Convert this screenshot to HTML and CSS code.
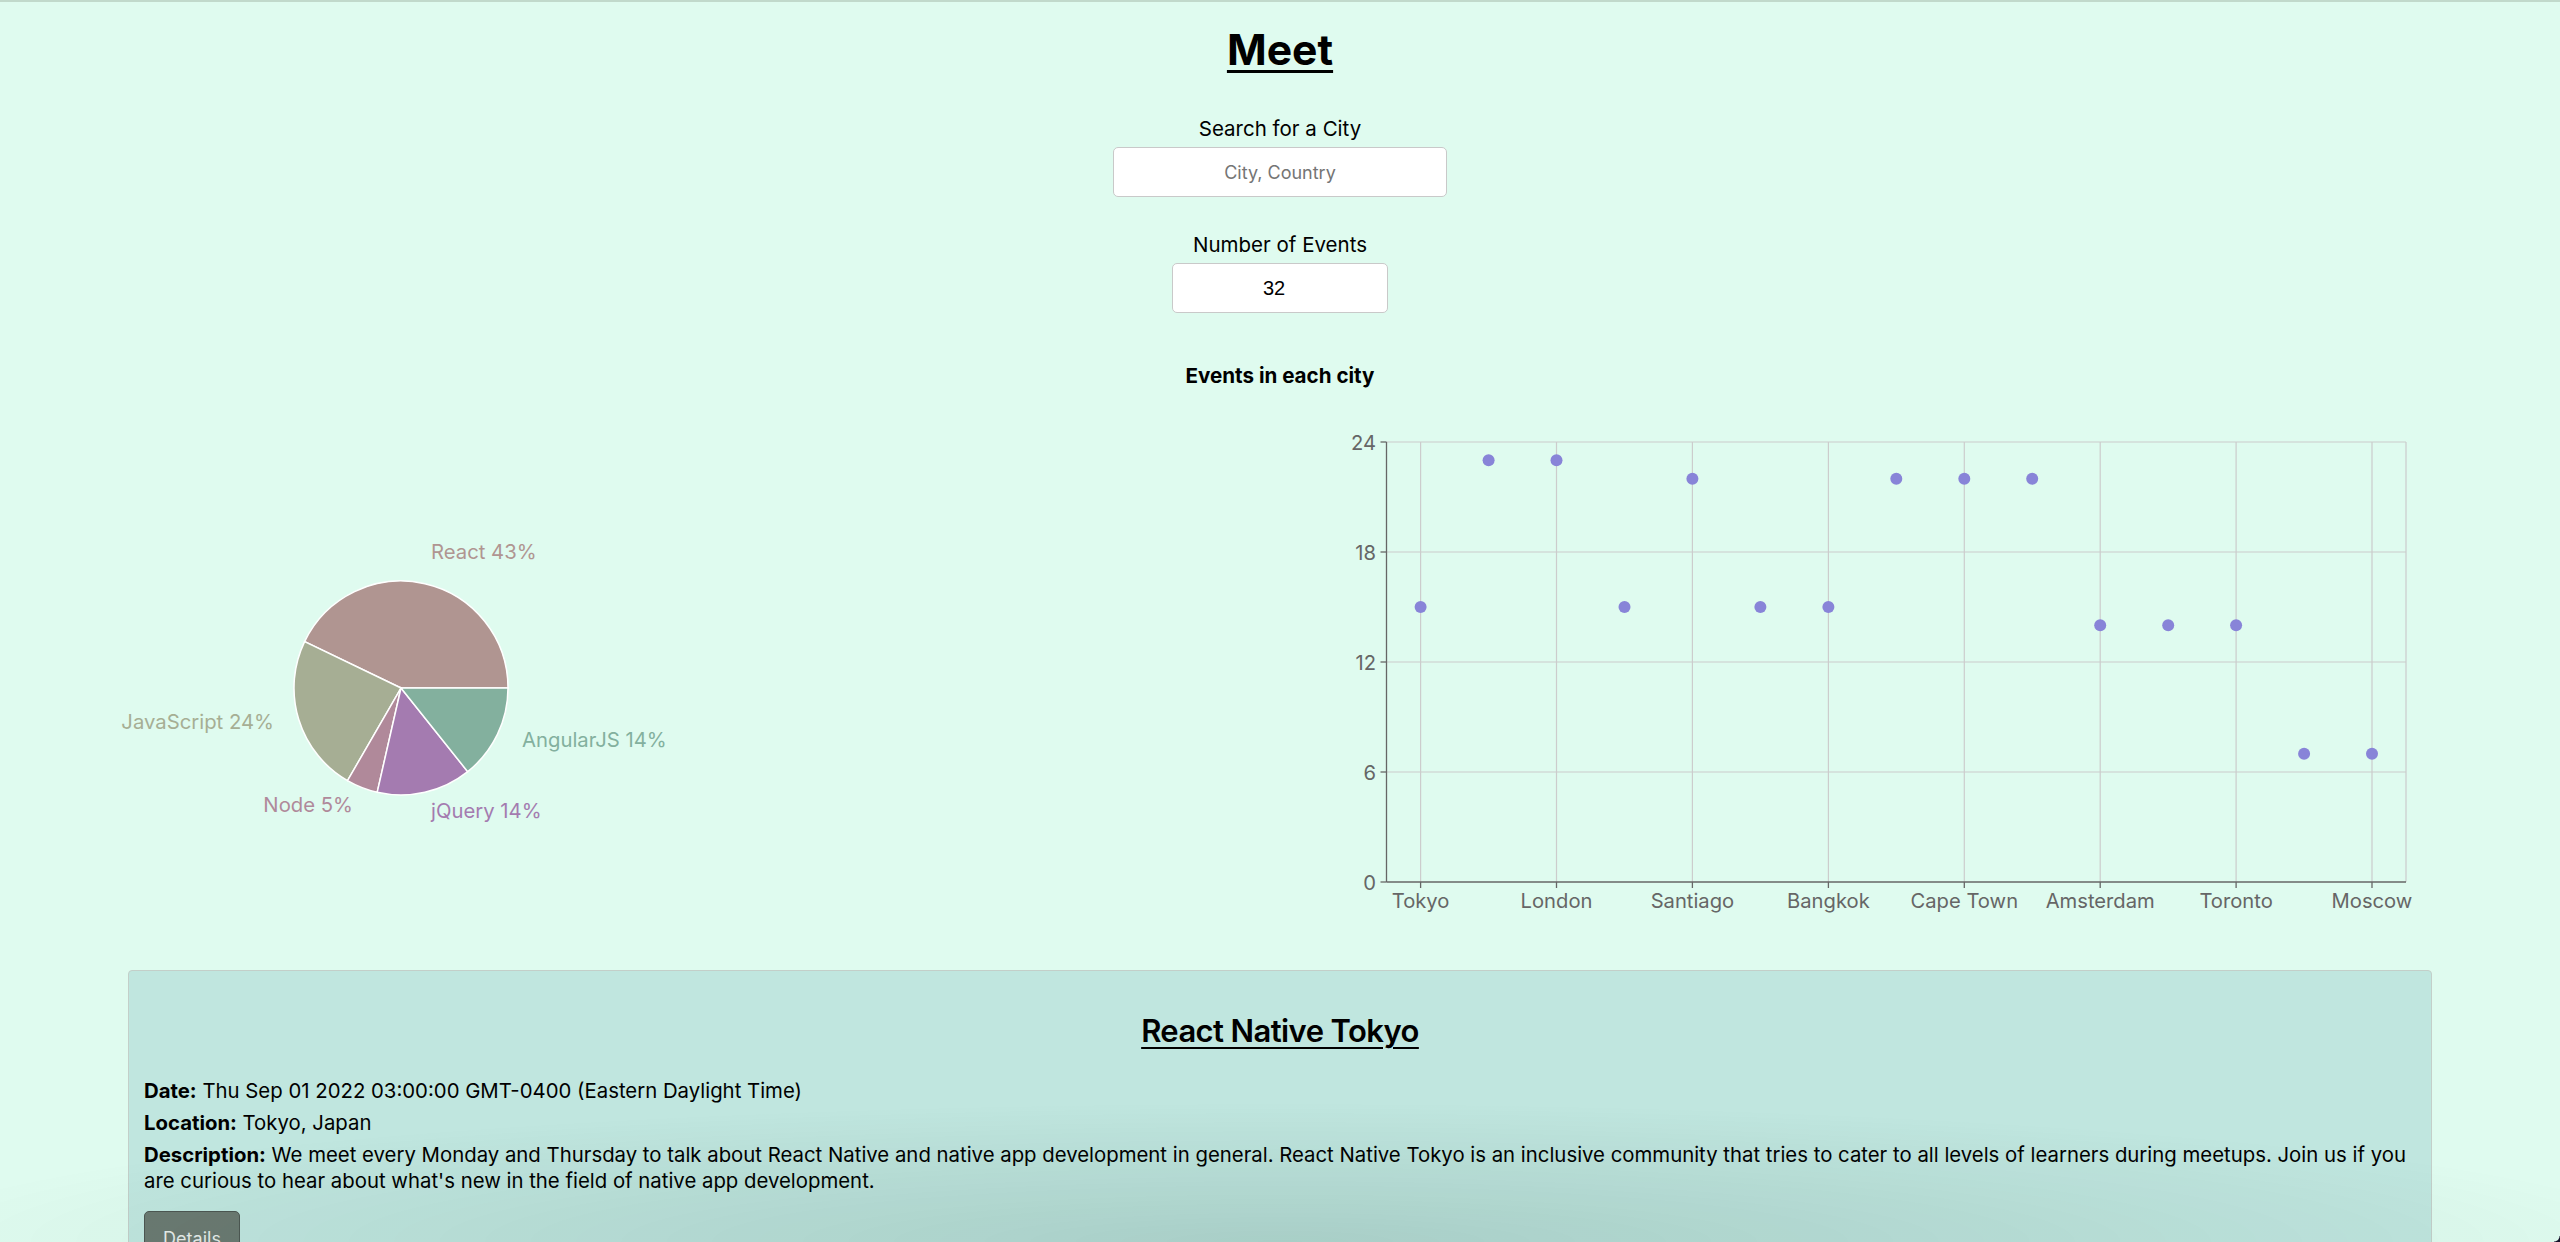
FILE: index.html
```html
<!DOCTYPE html>
<html lang="en">
<head>
<meta charset="utf-8">
<title>Meet</title>
<link rel="stylesheet" href="styles.css">
</head>
<body>
<div class="app">
  <h1 class="title">Meet</h1>

  <div class="field">
    <label class="field-label" for="city">Search for a City</label>
    <input id="city" class="city-input" type="text" placeholder="City, Country">
  </div>

  <div class="field field-number">
    <label class="field-label" for="num">Number of Events</label>
    <input id="num" class="number-input" type="number" value="32">
  </div>

  <h4 class="chart-heading">Events in each city</h4>

  <div class="charts">
    <svg class="chart pie-chart" width="1280" height="530" viewBox="0 0 1280 530">
      <g stroke="#fff" stroke-width="1.5">
        <path fill="#b09591" d="M401,288 L508,288 A107,107 0 0 0 304.60,241.57 Z"/>
        <path fill="#a6ae94" d="M401,288 L304.60,241.57 A107,107 0 0 0 347.5,380.66 Z"/>
        <path fill="#b0899a" d="M401,288 L347.5,380.66 A107,107 0 0 0 377.19,392.32 Z"/>
        <path fill="#a47bb0" d="M401,288 L377.19,392.32 A107,107 0 0 0 467.71,371.66 Z"/>
        <path fill="#83b09e" d="M401,288 L467.71,371.66 A107,107 0 0 0 508,288 Z"/>
      </g>
      <g class="pie-labels">
        <text x="431" y="159" fill="#b09591" text-anchor="start">React 43%</text>
        <text x="274" y="329" fill="#a6ae94" text-anchor="end">JavaScript 24%</text>
        <text x="522" y="347" fill="#83b09e" text-anchor="start">AngularJS 14%</text>
        <text x="353" y="412" fill="#b0899a" text-anchor="end">Node 5%</text>
        <text x="431" y="418" fill="#a47bb0" text-anchor="start">jQuery 14%</text>
      </g>
    </svg>

    <svg class="chart scatter-chart" width="1280" height="530" viewBox="0 0 1280 530">
      <g class="grid" stroke="#ccc" stroke-width="1.2" fill="none">
        <line x1="106.5" y1="42" x2="1126" y2="42"/>
        <line x1="106.5" y1="152" x2="1126" y2="152"/>
        <line x1="106.5" y1="262" x2="1126" y2="262"/>
        <line x1="106.5" y1="372" x2="1126" y2="372"/>
        <line x1="140.6" y1="42" x2="140.6" y2="482"/>
        <line x1="276.5" y1="42" x2="276.5" y2="482"/>
        <line x1="412.4" y1="42" x2="412.4" y2="482"/>
        <line x1="548.4" y1="42" x2="548.4" y2="482"/>
        <line x1="684.3" y1="42" x2="684.3" y2="482"/>
        <line x1="820.2" y1="42" x2="820.2" y2="482"/>
        <line x1="956.1" y1="42" x2="956.1" y2="482"/>
        <line x1="1092" y1="42" x2="1092" y2="482"/>
        <line x1="1126" y1="42" x2="1126" y2="482"/>
      </g>
      <g class="axis" stroke="#666" stroke-width="1.3" fill="none">
        <line x1="106.5" y1="42" x2="106.5" y2="482"/>
        <line x1="106.5" y1="482" x2="1126" y2="482"/>
        <line x1="100.5" y1="42" x2="106.5" y2="42"/>
        <line x1="100.5" y1="152" x2="106.5" y2="152"/>
        <line x1="100.5" y1="262" x2="106.5" y2="262"/>
        <line x1="100.5" y1="372" x2="106.5" y2="372"/>
        <line x1="100.5" y1="482" x2="106.5" y2="482"/>
        <line x1="140.6" y1="482" x2="140.6" y2="488"/>
        <line x1="276.5" y1="482" x2="276.5" y2="488"/>
        <line x1="412.4" y1="482" x2="412.4" y2="488"/>
        <line x1="548.4" y1="482" x2="548.4" y2="488"/>
        <line x1="684.3" y1="482" x2="684.3" y2="488"/>
        <line x1="820.2" y1="482" x2="820.2" y2="488"/>
        <line x1="956.1" y1="482" x2="956.1" y2="488"/>
        <line x1="1092" y1="482" x2="1092" y2="488"/>
      </g>
      <g class="tick-labels y-labels" text-anchor="end">
        <text x="96" y="50">24</text>
        <text x="96" y="160">18</text>
        <text x="96" y="270">12</text>
        <text x="96" y="380">6</text>
        <text x="96" y="490">0</text>
      </g>
      <g class="tick-labels x-labels" text-anchor="middle">
        <text x="140.6" y="508">Tokyo</text>
        <text x="276.5" y="508">London</text>
        <text x="412.4" y="508">Santiago</text>
        <text x="548.4" y="508">Bangkok</text>
        <text x="684.3" y="508">Cape Town</text>
        <text x="820.2" y="508">Amsterdam</text>
        <text x="956.1" y="508">Toronto</text>
        <text x="1092" y="508">Moscow</text>
      </g>
      <g class="dots" fill="#8884d8">
        <circle cx="140.6" cy="207" r="6"/>
        <circle cx="208.6" cy="60.3" r="6"/>
        <circle cx="276.5" cy="60.3" r="6"/>
        <circle cx="344.5" cy="207" r="6"/>
        <circle cx="412.4" cy="78.7" r="6"/>
        <circle cx="480.4" cy="207" r="6"/>
        <circle cx="548.4" cy="207" r="6"/>
        <circle cx="616.3" cy="78.7" r="6"/>
        <circle cx="684.3" cy="78.7" r="6"/>
        <circle cx="752.2" cy="78.7" r="6"/>
        <circle cx="820.2" cy="225.3" r="6"/>
        <circle cx="888.2" cy="225.3" r="6"/>
        <circle cx="956.1" cy="225.3" r="6"/>
        <circle cx="1024.1" cy="353.7" r="6"/>
        <circle cx="1092" cy="353.7" r="6"/>
      </g>
    </svg>
  </div>

  <ul class="event-list">
    <li class="event">
      <h2 class="event-title">React Native Tokyo</h2>
      <p class="event-line"><b>Date:</b> Thu Sep 01 2022 03:00:00 GMT-0400 (Eastern Daylight Time)</p>
      <p class="event-line"><b>Location:</b> Tokyo, Japan</p>
      <p class="event-line"><b>Description:</b> We meet every Monday and Thursday to talk about React Native and native app development in general. React Native Tokyo is an inclusive community that tries to cater to all levels of learners during meetups. Join us if you are curious to hear about what's new in the field of native app development.</p>
      <button class="details-btn" type="button">Details</button>
    </li>
  </ul>
</div>
<div class="bottom-shade"></div>
<div class="corner"></div>
</body>
</html>
```

FILE: styles.css
```css
html, body {
  margin: 0;
  padding: 0;
}

body {
  background: #dffbef;
  font-family: "Inter", "Noto Sans", sans-serif;
  color: #000;
  overflow: hidden;
  height: 1242px;
}

.app {
  border-top: 2px solid #c1d9cb;
  display: flex;
  flex-direction: column;
  align-items: center;
}

.title {
  margin: 23px 0 0;
  font-size: 42.67px;
  line-height: 50px;
  font-weight: 700;
  text-decoration: underline;
  text-decoration-thickness: 3px;
  text-underline-offset: 5px;
}

.field {
  display: flex;
  flex-direction: column;
  align-items: center;
  margin-top: 42px;
}

.field-number {
  margin-top: 36px;
}

.field-label {
  font-size: 20.5px;
  line-height: 24px;
  margin-bottom: 6px;
}

.city-input,
.number-input {
  box-sizing: border-box;
  height: 50px;
  border: 1px solid #c9c9c9;
  border-radius: 5px;
  background: #fff;
  text-align: center;
  font-family: "Inter", "Noto Sans", sans-serif;
  font-size: 18px;
  color: #000;
  outline: none;
}

.city-input {
  width: 334px;
}

.city-input::placeholder {
  color: #757575;
}

.number-input {
  width: 216px;
  padding-right: 14px;
  font-family: "Liberation Sans", Arial, sans-serif;
  font-size: 20px;
  -moz-appearance: textfield;
}

.number-input::-webkit-inner-spin-button,
.number-input::-webkit-outer-spin-button {
  -webkit-appearance: none;
  margin: 0;
}

.chart-heading {
  margin: 51px 0 0;
  font-size: 20.6px;
  line-height: 24px;
  font-weight: 700;
}

.charts {
  margin-top: 12px;
  width: 2560px;
  display: flex;
}

.chart {
  display: block;
  flex: 0 0 auto;
}

.pie-labels text {
  font-family: "Inter", sans-serif;
  font-size: 20.3px;
}

.tick-labels text {
  font-family: "Inter", sans-serif;
  font-size: 20.2px;
  fill: #666;
}

.event-list {
  list-style: none;
  margin: 40px 0 0;
  padding: 0;
  width: 2304px;
}

.event {
  box-sizing: border-box;
  background: #c0e6df;
  border: 1px solid #c3cfc9;
  border-radius: 4px;
  padding: 41px 15px 30px;
}

.event-title {
  margin: 0;
  text-align: center;
  font-size: 31px;
  line-height: 38px;
  font-weight: 600;
  letter-spacing: -0.6px;
  text-decoration: underline;
  text-decoration-thickness: 2px;
  text-underline-offset: 5px;
}

.event-line {
  margin: 0 0 6.5px;
  font-size: 20.35px;
  line-height: 25.5px;
}

.event-title + .event-line {
  margin-top: 28px;
}

.event-line b {
  font-weight: 700;
}

.details-btn {
  margin-top: 11px;
  width: 96px;
  height: 56px;
  border: 1px solid #4d5752;
  border-radius: 5px;
  background: #6b7a72;
  color: #e6ece9;
  font-family: "Inter", sans-serif;
  font-size: 18px;
  padding: 0;
}

.bottom-shade {
  position: fixed;
  left: 0;
  right: 0;
  bottom: 0;
  height: 140px;
  pointer-events: none;
  background: radial-gradient(ellipse 55% 100% at 50% 100%, rgba(0, 40, 30, 0.12), rgba(0, 40, 30, 0) 100%);
}

.corner {
  position: fixed;
  right: 0;
  bottom: 0;
  width: 6px;
  height: 6px;
  background: radial-gradient(circle at 0 0, transparent 5px, #14122a 6px);
}
```
